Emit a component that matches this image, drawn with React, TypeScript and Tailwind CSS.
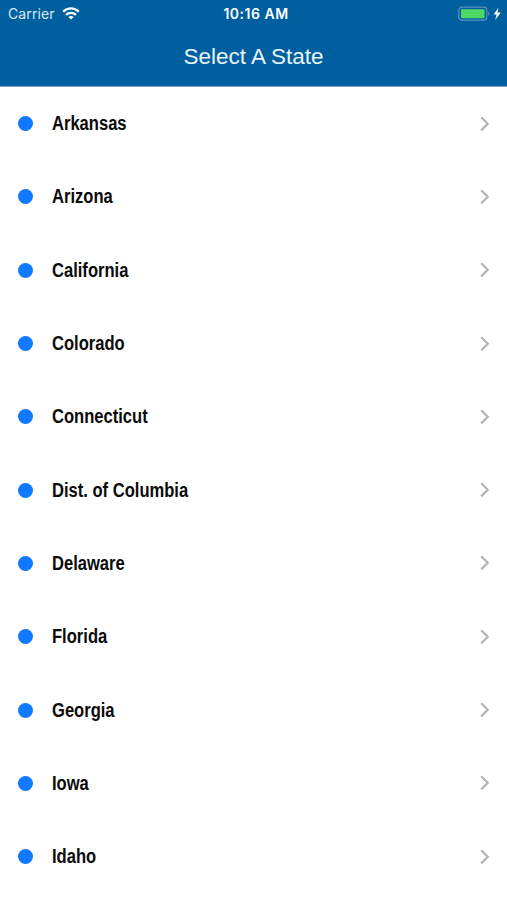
const STATES = [
  "Arkansas",
  "Arizona",
  "California",
  "Colorado",
  "Connecticut",
  "Dist. of Columbia",
  "Delaware",
  "Florida",
  "Georgia",
  "Iowa",
  "Idaho",
];

function WifiIcon() {
  return (
    <svg width="18" height="13" viewBox="0 0 18 13" fill="none" stroke="currentColor" strokeWidth="2.2">
      <path d="M1.2 4.8C5.6.3 12.4.3 16.8 4.8" />
      <path d="M4 7.9c2.9-2.8 7.1-2.8 10 0" />
      <path d="M9 12.6 6.3 10c1.6-1.4 3.8-1.4 5.4 0Z" fill="currentColor" stroke="none" />
    </svg>
  );
}

function BatteryIcon() {
  return (
    <svg width="44" height="16" viewBox="0 0 44 16">
      <rect x="0.8" y="1.2" width="28" height="13" rx="3" fill="none" stroke="#5b92c0" strokeWidth="1.2" />
      <rect x="3" y="3.2" width="23.6" height="9" rx="0.8" fill="#4cd964" />
      <path d="M30.3 5.4c1.7.7 1.7 3.9 0 4.6Z" fill="#5b92c0" />
      <path d="M40.4 1.8 35.6 8.6h3L37.2 14l5.6-7.4h-3.2Z" fill="#fff" />
    </svg>
  );
}

function StatusBar() {
  return (
    <div className="grid h-[27px] grid-cols-3 items-center pl-2 pr-[5px] font-['Inter',sans-serif] text-white">
      <div className="flex items-center gap-[7px]">
        <span className="pt-px text-[14px] leading-none tracking-[0.1px] text-[#dbe9f5]">Carrier</span>
        <WifiIcon />
      </div>
      <span className="pl-[2px] pt-px text-center text-[14px] font-semibold leading-none tracking-[0.5px]">10:16 AM</span>
      <div className="flex justify-end">
        <BatteryIcon />
      </div>
    </div>
  );
}

function StateRow({ name }: { name: string }) {
  return (
    <li className="flex h-[73.3px] items-center pl-[18px] pr-[17px]">
      <span className="size-[15px] rounded-full bg-[#0f7aff]" />
      {/* squeezed horizontally to get a condensed bold */}
      <span className="ml-[19px] flex-1 origin-left scale-x-[0.828] pb-px font-['Liberation_Sans',sans-serif] text-[20px] font-bold leading-none text-[#0b0b0b]">
        {name}
      </span>
      <svg width="10" height="16" viewBox="0 0 10 16" fill="none" stroke="#b4b4b6" strokeWidth="2.2">
        <path d="M1.2 1.2 7.8 7.8 1.2 14.4" />
      </svg>
    </li>
  );
}

export default function App() {
  return (
    <div className="h-[900px] w-full overflow-hidden bg-white">
      <header className="h-[87px] border-b border-[#74a4cb] bg-[#00609f]">
        <StatusBar />
        <h1 className="mt-[18px] text-center font-['Liberation_Sans',sans-serif] text-[22.5px] leading-[24px] text-[#eaf4fc]">
          Select A State
        </h1>
      </header>
      <ul>
        {STATES.map((name) => (
          <StateRow key={name} name={name} />
        ))}
      </ul>
    </div>
  );
}
